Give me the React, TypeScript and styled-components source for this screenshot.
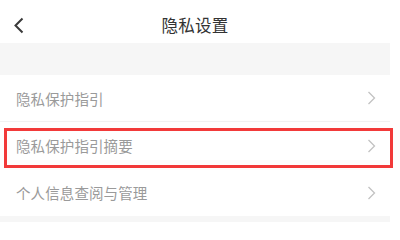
import React from 'react';
import styled, { createGlobalStyle } from 'styled-components';

const GlobalStyle = createGlobalStyle`
  html, body {
    margin: 0;
    padding: 0;
    background: #ffffff;
  }
  body {
    font-family: "Noto Sans CJK SC", "Noto Sans", sans-serif;
  }
`;

const Page = styled.div`
  width: 390px;
  background: #ffffff;
  display: flex;
  flex-direction: column;
`;

const Header = styled.div`
  height: 43px;
  display: flex;
  align-items: center;
  justify-content: center;
  position: relative;
  padding-top: 6px;
  box-sizing: border-box;
`;

const BackButton = styled.div`
  position: absolute;
  left: 13px;
  top: 17px;
  width: 12px;
  height: 17px;
  display: flex;
`;

const Title = styled.div`
  font-size: 16.5px;
  color: #333333;
  letter-spacing: 0.3px;
`;

const Spacer = styled.div`
  height: 32px;
  background: #f6f6f6;
`;

const List = styled.div`
  display: flex;
  flex-direction: column;
`;

const Row = styled.div<{ $divider?: boolean }>`
  height: 47px;
  display: flex;
  align-items: center;
  justify-content: space-between;
  padding: 0 14px 0 16px;
  position: relative;
  box-sizing: border-box;
  border-bottom: ${p => (p.$divider ? '1px solid #f2f2f2' : 'none')};
`;

const Label = styled.span`
  font-size: 14.5px;
  color: #9a9a9a;
  letter-spacing: 0.1px;
`;

const Highlight = styled.div`
  position: absolute;
  left: 4px;
  right: -3px;
  top: 6px;
  bottom: 1px;
  border: 3px solid #f23a3a;
  pointer-events: none;
`;

const Footer = styled.div`
  height: 6px;
  background: #f6f6f6;
`;

const Chevron = () => (
  <svg width="9" height="14" viewBox="0 0 9 14">
    <path d="M1.5 1 L7.5 7 L1.5 13" fill="none" stroke="#c2c2c2" strokeWidth="1.3" />
  </svg>
);

const items = [
  { label: '隐私保护指引', divider: true },
  { label: '隐私保护指引摘要', highlighted: true },
  { label: '个人信息查阅与管理' },
];

export default function App() {
  return (
    <>
      <GlobalStyle />
      <Page>
        <Header>
          <BackButton>
            <svg width="12" height="17" viewBox="0 0 12 17">
              <path d="M9.5 1.5 L2.5 8.5 L9.5 15.5" fill="none" stroke="#3a3a3a" strokeWidth="2" />
            </svg>
          </BackButton>
          <Title>隐私设置</Title>
        </Header>
        <Spacer />
        <List>
          {items.map(item => (
            <Row key={item.label} $divider={item.divider}>
              <Label>{item.label}</Label>
              <Chevron />
              {item.highlighted && <Highlight />}
            </Row>
          ))}
        </List>
        <Footer />
      </Page>
    </>
  );
}
